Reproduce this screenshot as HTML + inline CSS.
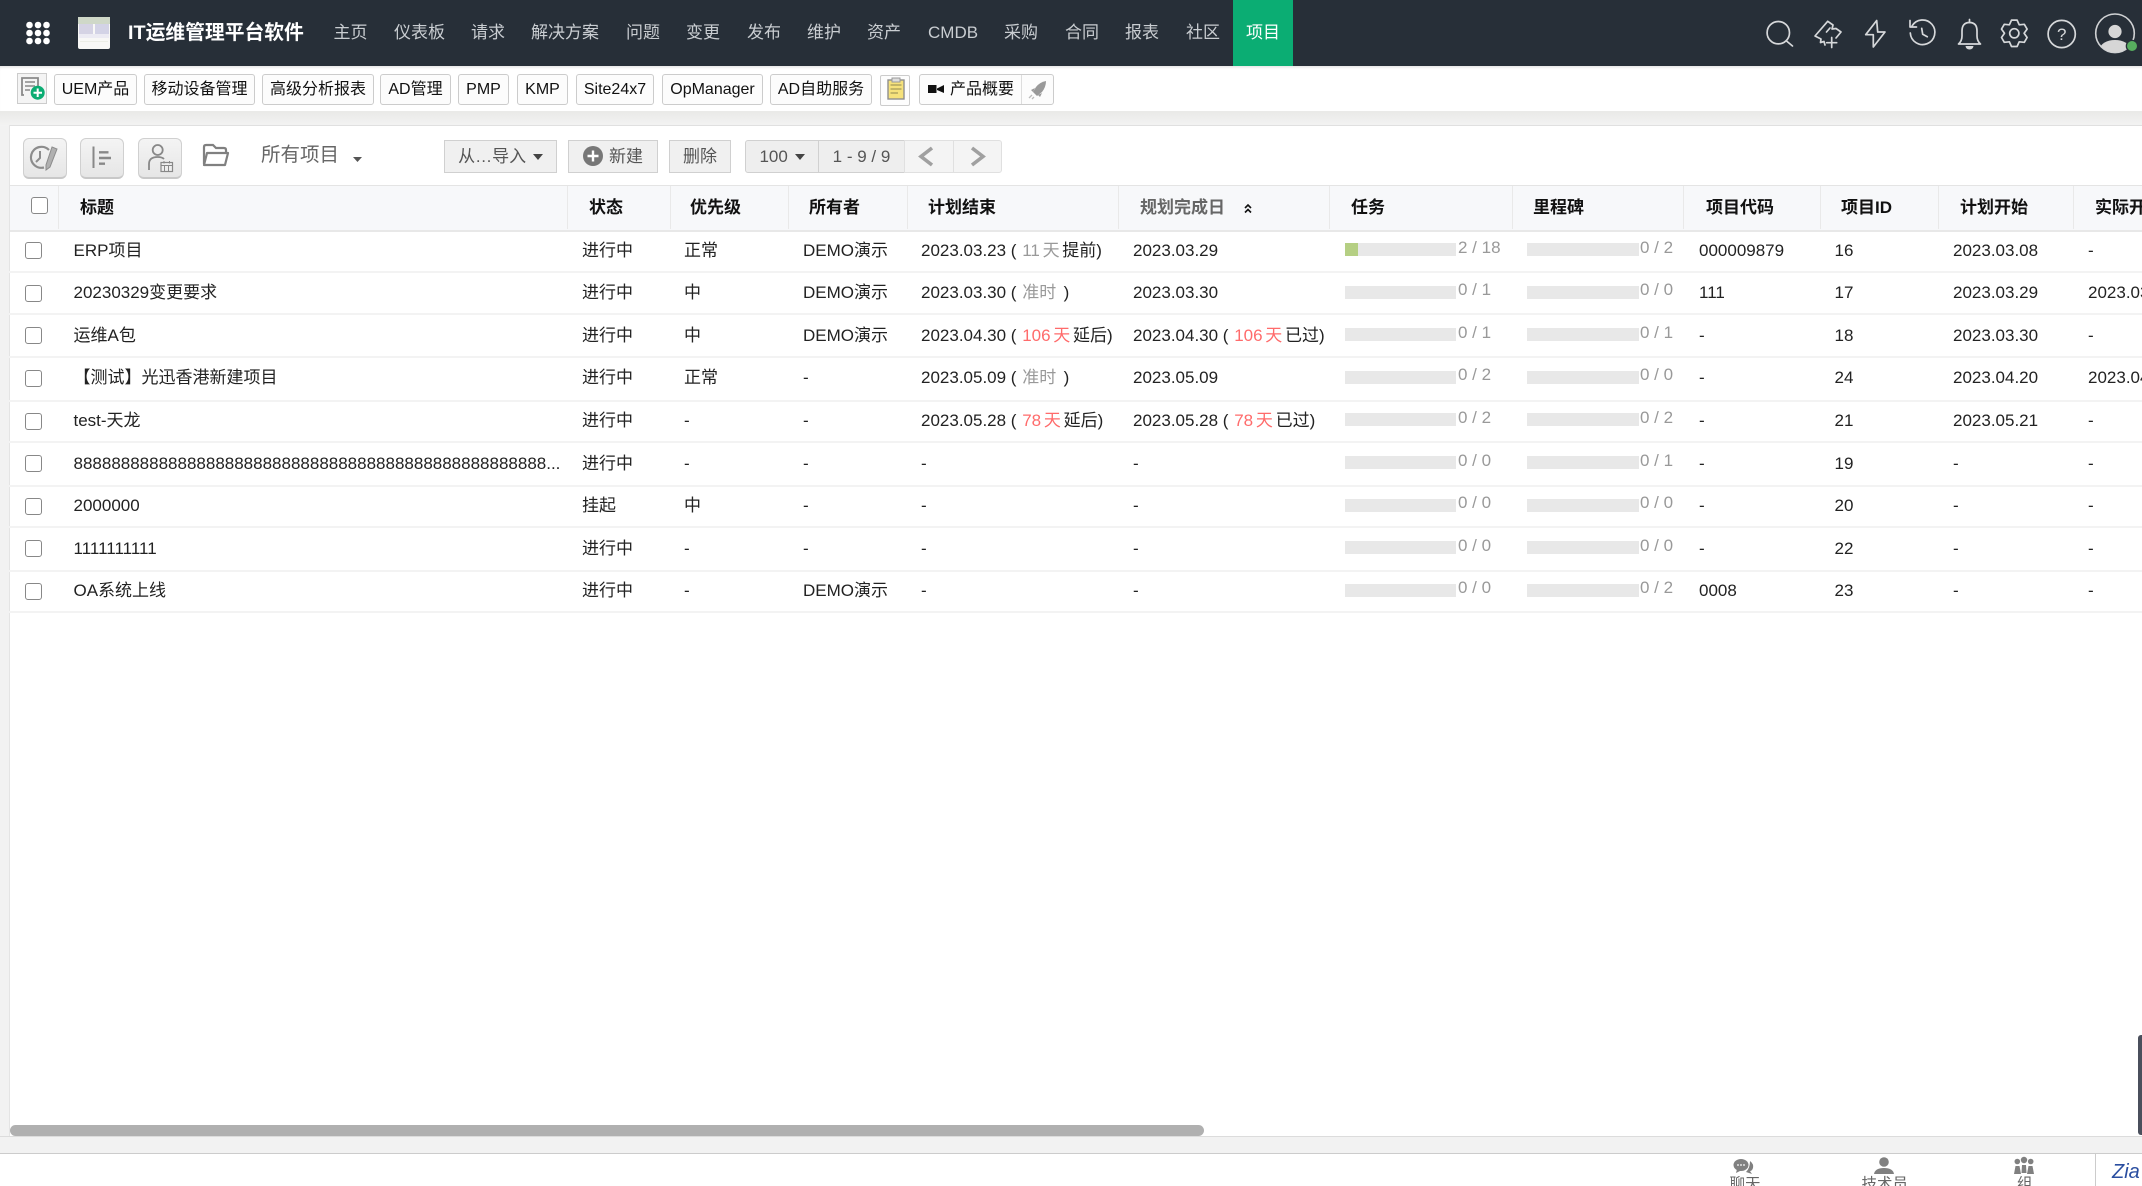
<!DOCTYPE html>
<html lang="zh-CN"><head><meta charset="utf-8"><title>项目</title>
<style>
html,body{margin:0;padding:0;background:#fff}
#p{position:relative;width:2142px;height:1186px;overflow:hidden;background:#fff;font-family:"Liberation Sans","Noto Sans CJK SC",sans-serif;font-size:17px;color:#222}
#p div,#p span.a,#p svg{position:absolute}
.nav{top:0;height:66px;line-height:66px;color:#c9cdd1;font-size:17px;white-space:nowrap}
.tb{top:74px;height:29px;line-height:29px;border:1px solid #ccc;border-radius:3px;background:#fcfcfc;font-size:16px;color:#111;text-align:center;white-space:nowrap}
.ib{top:138px;height:38px;border:1px solid #d0d0d0;border-bottom:2px solid #c8c8c8;border-radius:6px;background:linear-gradient(#f4f4f4,#e6e6e6);box-sizing:content-box}
.bt{top:140px;height:31px;line-height:31px;border:1px solid #d0d0d0;background:#f0f0f0;color:#555;text-align:center;white-space:nowrap}
.th{top:187px;height:42px;line-height:42px;font-weight:bold;color:#111;white-space:nowrap}
.vl{top:186px;height:43px;width:1px;background:#e9e9e9}
.hl{left:9px;width:2133px;height:2px;background:#f3f3f3}
.r{left:0;width:2142px;height:42px;line-height:42px;white-space:nowrap}
.r>span{position:absolute;top:1px}
.c0{left:73.5px}.c1{left:582px}.c2{left:684px}.c3{left:803px}.c4{left:921px}.c5{left:1133px}.c6{left:1458px;color:#999;margin-top:-3px}.c7{left:1640px;color:#999;margin-top:-3px}.c8{left:1699px}.c9{left:1834.5px}.c10{left:1953px}.c11{left:2088px}
.b1,.b2{top:14px;height:13px;background:#e8e8e8}
.b1{left:1345px;width:111px}.b2{left:1527px;width:112px}
.r.o .b1,.r.o .b2{top:15px}
.cb{left:24.5px;top:13px;width:15px;height:15px;border:1px solid #888;border-radius:3px;background:#fff}
.g,.d{margin-left:1px;margin-right:-2px;word-spacing:-2px}
.g{color:#999}.d{color:#ff6b6b}
</style></head><body><div id="p">

<div style="left:0;top:0;width:2142px;height:66px;background:#272f38"></div>
<div style="left:0;top:66px;width:2142px;height:45px;background:#fff;box-shadow:inset 0 3px 3px -2px #ddd"></div>
<div style="left:0;top:111px;width:2142px;height:15px;background:linear-gradient(#e9e9e7,#f3f3f3)"></div>
<div style="left:0;top:126px;width:9px;height:1010px;background:#f2f2f2"></div>
<div style="left:9px;top:125px;width:2133px;height:1px;background:#e0e0e0"></div>
<div style="left:9px;top:125px;width:1px;height:1011px;background:#e4e4e4"></div>

<svg style="left:0;top:0" width="2142" height="66" viewBox="0 0 2142 66">
<g fill="#fff"><circle cx="29.5" cy="25" r="3.3"/><circle cx="38" cy="25" r="3.3"/><circle cx="46.5" cy="25" r="3.3"/><circle cx="29.5" cy="33" r="3.3"/><circle cx="38" cy="33" r="3.3"/><circle cx="46.5" cy="33" r="3.3"/><circle cx="29.5" cy="41" r="3.3"/><circle cx="38" cy="41" r="3.3"/><circle cx="46.5" cy="41" r="3.3"/></g>
<rect x="78" y="17" width="32" height="32" rx="2" fill="#f8f8f6"/>
<rect x="78" y="17" width="32" height="7" fill="#cfd8c8"/>
<rect x="79" y="24" width="14" height="10" fill="#d5d3e4"/><rect x="95" y="24" width="14" height="10" fill="#d3d3e6"/>
<rect x="79" y="34" width="30" height="4" fill="#ecebf3"/>
<rect x="80" y="41" width="28" height="1" fill="#eceee6"/>
<g fill="none" stroke="#d6d8da" stroke-width="1.7" stroke-linejoin="round" stroke-linecap="round">
<circle cx="1778.3" cy="32.7" r="11.2"/><path d="M1786.5 41 L1792.5 46"/>
<path d="M1825 45 L1824 41.500 L1820.500 42.500 L1821 39 L1815 36 L1827.700 21.300 L1833 25 L1832 29 L1836 28.500 L1841 32 L1836 38"/><path d="M1826.500 32 L1830 28"/><path d="M1831.700 37.500V47.500M1826.700 42.700H1836.700"/>
<path d="M1876.700 20.500 L1865.700 34.700 L1873.300 34.700 L1873.300 47 L1885 32 L1877.700 32 Z"/>
<path d="M1912 26 A12.3 12.3 0 1 1 1910.3 33"/><path d="M1910 20.500 V27 H1916.500"/><path d="M1921.700 28.300 L1922.700 34.300 L1927.300 36.700"/>
<path d="M1958.500 44 Q1962 41 1962 36 V31 Q1962 22.500 1969.500 22.500 Q1977 22.500 1977 31 V36 Q1977 41 1980.500 44 Z"/><path d="M1969.500 19.500 V22.500"/>
<path transform="translate(2014.3 33.3)" d="M-2.800 -13.200 L2.800 -13.200 L4.900 -8.500 L10 -9 L12.800 -4.200 L9.800 0 L12.800 4.200 L10 9 L4.900 8.500 L2.800 13.200 L-2.800 13.200 L-4.900 8.500 L-10 9 L-12.800 4.200 L-9.800 0 L-12.800 -4.200 L-10 -9 L-4.900 -8.500 Z"/>
<circle cx="2014.3" cy="33.3" r="4.600"/>
<circle cx="2061.700" cy="34" r="13.600"/>
</g>
<path d="M1965.500 46 H1973.500 Q1973 49.500 1969.500 49.500 Q1966 49.500 1965.500 46 Z" fill="#d6d8da"/>
<text x="2061.700" y="40" text-anchor="middle" font-size="17" fill="#d6d8da" font-family="Liberation Sans">?</text>
<clipPath id="av"><circle cx="2115" cy="33.300" r="19"/></clipPath>
<circle cx="2115" cy="33.300" r="19.300" fill="none" stroke="#d0d2d4" stroke-width="1.600"/>
<circle cx="2115" cy="31.500" r="6.600" fill="#d6d6d6"/>
<ellipse cx="2115" cy="49" rx="15" ry="9" fill="#d6d6d6" clip-path="url(#av)"/>
<circle cx="2132" cy="46" r="6.300" fill="#272f38"/><circle cx="2132" cy="46" r="5" fill="#57ad5f"/>
</svg>
<div style="left:128px;top:0;height:66px;line-height:66px;color:#fff;font-size:19.800px;font-weight:bold;white-space:nowrap">IT运维管理平台软件</div>
<div class="nav" style="left:333.500px">主页</div>
<div class="nav" style="left:394px">仪表板</div>
<div class="nav" style="left:471px">请求</div>
<div class="nav" style="left:531px">解决方案</div>
<div class="nav" style="left:626px">问题</div>
<div class="nav" style="left:686px">变更</div>
<div class="nav" style="left:747px">发布</div>
<div class="nav" style="left:807px">维护</div>
<div class="nav" style="left:867px">资产</div>
<div class="nav" style="left:928px">CMDB</div>
<div class="nav" style="left:1004px">采购</div>
<div class="nav" style="left:1065px">合同</div>
<div class="nav" style="left:1125px">报表</div>
<div class="nav" style="left:1186px">社区</div>
<div style="left:1233px;top:0;width:60px;height:66px;background:#0bad73"></div>
<div class="nav" style="left:1246px;color:#fff">项目</div>

<div style="left:17px;top:73px;width:28px;height:29px;border:1px solid #ccc;background:#f4f4f4"></div>
<svg style="left:17px;top:73px" width="30" height="31" viewBox="17 73 30 31">
<path d="M24 95 H22 V78 H38 V88" fill="none" stroke="#8a8a8a" stroke-width="1.800"/>
<path d="M25 82H35M25 86H35M25 90H30" stroke="#8a8a8a" stroke-width="1.500"/>
<circle cx="37.700" cy="92.700" r="7" fill="#0bad73"/><path d="M37.700 88.500V97M33.500 92.700H42" stroke="#fff" stroke-width="2"/>
</svg>
<div class="tb" style="left:54px;width:81px">UEM产品</div>
<div class="tb" style="left:144px;width:109px">移动设备管理</div>
<div class="tb" style="left:262px;width:110px">高级分析报表</div>
<div class="tb" style="left:380px;width:69px">AD管理</div>
<div class="tb" style="left:458px;width:49px">PMP</div>
<div class="tb" style="left:517px;width:49px">KMP</div>
<div class="tb" style="left:576px;width:76px">Site24x7</div>
<div class="tb" style="left:662px;width:99px">OpManager</div>
<div class="tb" style="left:770px;width:100px">AD自助服务</div>
<div style="left:880px;top:75px;width:28px;height:29px;border:1px solid #ccc;background:#fdfdfd;border-radius:2px"></div>
<svg style="left:880px;top:75px" width="30" height="31" viewBox="880 75 30 31">
<rect x="888" y="80" width="16" height="19" fill="#f6e27c" stroke="#8f8f8f" stroke-width="1.400"/>
<rect x="892" y="78" width="8" height="4" fill="#ddd" stroke="#999"/>
<path d="M890.500 85H901.500M890.500 89H901.500M890.500 93H898" stroke="#a59a58" stroke-width="1.200"/>
</svg>
<div class="tb" style="left:919px;width:133px;text-align:left"></div>
<div style="left:1021px;top:75px;width:1px;height:29px;background:#ddd"></div>
<svg style="left:925px;top:80px" width="24" height="18" viewBox="925 80 24 18"><rect x="928" y="85" width="8.500" height="8" fill="#111"/><path d="M937 88.500 L944 85 V93 L937 90 Z" fill="#111"/></svg>
<div style="left:950px;top:74px;height:31px;line-height:31px;font-size:16px;color:#111;white-space:nowrap">产品概要</div>
<svg style="left:1027px;top:79px" width="22" height="22" viewBox="1027 79 22 22">
<path d="M1046 81 Q1040 82 1036 87 L1033 92 L1037 96 L1042 92 Q1046 87 1046 81 Z" fill="#999"/>
<path d="M1035 88 L1031 90 L1033 92 Z M1042 93 L1040 97 L1038 95 Z" fill="#999"/>
<path d="M1032 95 L1029 98 M1034 97 L1032 99" stroke="#bbb" stroke-width="1.300"/>
</svg>

<div class="ib" style="left:23px;width:42px"></div>
<svg style="left:23px;top:138px" width="44" height="41" viewBox="23 138 44 41">
<path d="M49 150 A10.500 10.500 0 1 0 44 167.500" fill="none" stroke="#8c8c8c" stroke-width="2.200"/>
<path d="M40 151 V158 L36 162" fill="none" stroke="#8c8c8c" stroke-width="2"/>
<path d="M52 147 L57 149 L50 167 L46 170 L46 165 Z" fill="#b0b0b0" stroke="#8c8c8c"/>
</svg>
<div class="ib" style="left:80px;width:42px"></div>
<svg style="left:80px;top:138px" width="44" height="41" viewBox="80 138 44 41">
<path d="M93.500 146.500V168" stroke="#888" stroke-width="2"/>
<path d="M99 152.300H108.500M99 158H111M99 163.700H105" stroke="#888" stroke-width="2.400"/>
</svg>
<div class="ib" style="left:138px;width:42px"></div>
<svg style="left:138px;top:138px" width="44" height="41" viewBox="138 138 44 41">
<circle cx="157.700" cy="150" r="5" fill="none" stroke="#888" stroke-width="1.800"/>
<path d="M149 170 V164 Q149 157 157.700 157 Q162 157 164 159" fill="none" stroke="#888" stroke-width="1.800"/>
<rect x="161" y="162.500" width="11.500" height="9" fill="#eee" stroke="#888" stroke-width="1.200"/>
<path d="M161 165.500H172.500M164.500 165.500V171.500M168.500 165.500V171.500M164 161V163.500M169.500 161V163.500" stroke="#888"/>
</svg>
<svg style="left:202px;top:143px" width="29" height="26" viewBox="202 143 29 26">
<path d="M204 164 V147 Q204 145 206 145 H213 L216 148 H224 Q226 148 226 150 V152" fill="none" stroke="#808080" stroke-width="2.200"/>
<path d="M204 165 L207 153 H228 L225 165 Z" fill="none" stroke="#808080" stroke-width="2.200" stroke-linejoin="round"/>
</svg>
<div style="left:261px;top:138px;height:34px;line-height:34px;font-size:19.500px;color:#666;white-space:nowrap">所有项目</div>
<svg style="left:350px;top:155px" width="14" height="9" viewBox="0 0 14 9"><path d="M3 2H12L7.500 7Z" fill="#555"/></svg>

<div class="bt" style="left:444px;width:111px">从…导入 <span style="display:inline-block;width:0;height:0;border:5px solid transparent;border-top:6px solid #444;border-bottom:0;vertical-align:2px;margin-left:2px"></span></div>
<div class="bt" style="left:568px;width:88px;text-indent:26px">新建</div>
<svg style="left:582px;top:145px" width="22" height="22" viewBox="0 0 22 22"><circle cx="11" cy="11" r="10" fill="#777"/><path d="M11 5.500V16.500M5.500 11H16.500" stroke="#fff" stroke-width="2.400"/></svg>
<div class="bt" style="left:669px;width:60px">删除</div>
<div class="bt" style="left:745px;width:72px;border-radius:3px 0 0 3px;background:#eee">100 <span style="display:inline-block;width:0;height:0;border:5px solid transparent;border-top:6px solid #444;border-bottom:0;vertical-align:2px;margin-left:2px"></span></div>
<div class="bt" style="left:818px;width:85px;background:#eee">1 - 9 / 9</div>
<div class="bt" style="left:904px;width:48px;background:#f4f4f4;border-color:#e0e0e0"></div>
<div class="bt" style="left:953px;width:47px;background:#f4f4f4;border-color:#e0e0e0;border-radius:0 3px 3px 0"></div>
<svg style="left:915px;top:146px" width="75" height="22" viewBox="915 146 75 22"><path d="M932 148 L921 156.500 L932 165" fill="none" stroke="#a0a0a0" stroke-width="3.600"/><path d="M972 148 L983 156.500 L972 165" fill="none" stroke="#a0a0a0" stroke-width="3.600"/></svg>

<div style="left:10px;top:185px;width:2132px;height:44px;background:#f7f8fa;border-top:1px solid #e4e4e4;border-bottom:2px solid #e8e8e8"></div>
<div class="vl" style="left:58px"></div><div class="vl" style="left:567px"></div><div class="vl" style="left:670px"></div><div class="vl" style="left:788px"></div><div class="vl" style="left:907px"></div><div class="vl" style="left:1118px"></div><div class="vl" style="left:1329px"></div><div class="vl" style="left:1512px"></div><div class="vl" style="left:1683px"></div><div class="vl" style="left:1820px"></div><div class="vl" style="left:1938px"></div><div class="vl" style="left:2073px"></div>
<div style="left:31px;top:197px;width:15px;height:15px;border:1px solid #888;border-radius:3px;background:#fff"></div>
<div class="th" style="left:80px">标题</div>
<div class="th" style="left:589px">状态</div>
<div class="th" style="left:690px">优先级</div>
<div class="th" style="left:809px">所有者</div>
<div class="th" style="left:928px">计划结束</div>
<div class="th" style="left:1140px;color:#666">规划完成日</div>
<svg style="left:1243px;top:203px" width="10" height="11" viewBox="0 0 10 11"><path d="M2 5 L5 2 L8 5 M2 9.500 L5 6.500 L8 9.500" fill="none" stroke="#111" stroke-width="1.600"/></svg>
<div class="th" style="left:1351px">任务</div>
<div class="th" style="left:1533px">里程碑</div>
<div class="th" style="left:1706px">项目代码</div>
<div class="th" style="left:1841px">项目ID</div>
<div class="th" style="left:1960px">计划开始</div>
<div class="th" style="left:2095px">实际开始</div>

<div class="hl" style="top:271px"></div><div class="hl" style="top:313px"></div><div class="hl" style="top:356px"></div><div class="hl" style="top:400px"></div><div class="hl" style="top:441px"></div><div class="hl" style="top:485px"></div><div class="hl" style="top:526px"></div><div class="hl" style="top:570px"></div><div class="hl" style="top:611px"></div>

<div class="r" style="top:229px"><div class="cb"></div><span class="c0">ERP项目</span><span class="c1">进行中</span><span class="c2">正常</span><span class="c3">DEMO演示</span><span class="c4">2023.03.23 ( <span class="g">11 天</span> 提前)</span><span class="c5">2023.03.29</span><div class="b1"></div><div style="left:1345px;top:14px;width:13px;height:13px;background:#b5cf83"></div><span class="c6">2 / 18</span><div class="b2"></div><span class="c7">0 / 2</span><span class="c8">000009879</span><span class="c9">16</span><span class="c10">2023.03.08</span><span class="c11">-</span></div>

<div class="r o" style="top:271px"><div class="cb" style="top:14px"></div><span class="c0">20230329变更要求</span><span class="c1">进行中</span><span class="c2">中</span><span class="c3">DEMO演示</span><span class="c4">2023.03.30 ( <span class="g">准时</span>&nbsp; )</span><span class="c5">2023.03.30</span><div class="b1"></div><span class="c6">0 / 1</span><div class="b2"></div><span class="c7">0 / 0</span><span class="c8">111</span><span class="c9">17</span><span class="c10">2023.03.29</span><span class="c11">2023.03.29</span></div>

<div class="r" style="top:314px"><div class="cb"></div><span class="c0">运维A包</span><span class="c1">进行中</span><span class="c2">中</span><span class="c3">DEMO演示</span><span class="c4">2023.04.30 ( <span class="d">106 天</span> 延后)</span><span class="c5">2023.04.30 ( <span class="d">106 天</span> 已过)</span><div class="b1"></div><span class="c6">0 / 1</span><div class="b2"></div><span class="c7">0 / 1</span><span class="c8">-</span><span class="c9">18</span><span class="c10">2023.03.30</span><span class="c11">-</span></div>

<div class="r o" style="top:356px"><div class="cb" style="top:14px"></div><span class="c0">【测试】光迅香港新建项目</span><span class="c1">进行中</span><span class="c2">正常</span><span class="c3">-</span><span class="c4">2023.05.09 ( <span class="g">准时</span>&nbsp; )</span><span class="c5">2023.05.09</span><div class="b1"></div><span class="c6">0 / 2</span><div class="b2"></div><span class="c7">0 / 0</span><span class="c8">-</span><span class="c9">24</span><span class="c10">2023.04.20</span><span class="c11">2023.04.20</span></div>

<div class="r" style="top:399px"><div class="cb" style="top:14px"></div><span class="c0">test-天龙</span><span class="c1">进行中</span><span class="c2">-</span><span class="c3">-</span><span class="c4">2023.05.28 ( <span class="d">78 天</span> 延后)</span><span class="c5">2023.05.28 ( <span class="d">78 天</span> 已过)</span><div class="b1"></div><span class="c6">0 / 2</span><div class="b2"></div><span class="c7">0 / 2</span><span class="c8">-</span><span class="c9">21</span><span class="c10">2023.05.21</span><span class="c11">-</span></div>

<div class="r" style="top:442px"><div class="cb"></div><span class="c0">88888888888888888888888888888888888888888888888888...</span><span class="c1">进行中</span><span class="c2">-</span><span class="c3">-</span><span class="c4">-</span><span class="c5">-</span><div class="b1"></div><span class="c6">0 / 0</span><div class="b2"></div><span class="c7">0 / 1</span><span class="c8">-</span><span class="c9">19</span><span class="c10">-</span><span class="c11">-</span></div>

<div class="r o" style="top:484px"><div class="cb" style="top:14px"></div><span class="c0">2000000</span><span class="c1">挂起</span><span class="c2">中</span><span class="c3">-</span><span class="c4">-</span><span class="c5">-</span><div class="b1"></div><span class="c6">0 / 0</span><div class="b2"></div><span class="c7">0 / 0</span><span class="c8">-</span><span class="c9">20</span><span class="c10">-</span><span class="c11">-</span></div>

<div class="r" style="top:527px"><div class="cb"></div><span class="c0">1111111111</span><span class="c1">进行中</span><span class="c2">-</span><span class="c3">-</span><span class="c4">-</span><span class="c5">-</span><div class="b1"></div><span class="c6">0 / 0</span><div class="b2"></div><span class="c7">0 / 0</span><span class="c8">-</span><span class="c9">22</span><span class="c10">-</span><span class="c11">-</span></div>

<div class="r o" style="top:569px"><div class="cb" style="top:14px"></div><span class="c0">OA系统上线</span><span class="c1">进行中</span><span class="c2">-</span><span class="c3">DEMO演示</span><span class="c4">-</span><span class="c5">-</span><div class="b1"></div><span class="c6">0 / 0</span><div class="b2"></div><span class="c7">0 / 2</span><span class="c8">0008</span><span class="c9">23</span><span class="c10">-</span><span class="c11">-</span></div>

<div style="left:10px;top:1125px;width:1194px;height:11px;background:#b0b0b0;border-radius:5.500px"></div>
<div style="left:2138px;top:1035px;width:4px;height:100px;background:#4a4f5c;border-radius:3px 0 0 3px"></div>
<div style="left:0;top:1136px;width:2142px;height:18px;background:#f2f2f2;border-top:1px solid #dcdcdc;border-bottom:1px solid #ccc;box-sizing:border-box"></div>
<div style="left:2095px;top:1154px;width:1px;height:32px;background:#ccc"></div>

<svg style="left:1720px;top:1154px" width="320" height="24" viewBox="1720 1154 320 24">
<g fill="#808080">
<ellipse cx="1741" cy="1165" rx="7.500" ry="6"/><path d="M1737 1169 L1736 1173 L1742 1170 Z"/>
<path d="M1750 1161 Q1754 1164 1753 1168 Q1752 1171 1750 1171 L1752 1174 L1746 1172 Q1750 1168 1750 1161 Z"/>
<circle cx="1884" cy="1162" r="4.800"/><path d="M1874 1174 Q1875 1168 1884 1168 Q1893 1168 1894 1174 Z"/>
<circle cx="2024" cy="1160" r="3.200"/><circle cx="2017.300" cy="1161.500" r="2.800"/><circle cx="2030.700" cy="1161.500" r="2.800"/>
<path d="M2014 1174 L2015.500 1166 H2019.500 L2021 1174 Z M2027 1174 L2028.500 1166 H2032.500 L2034 1174 Z M2021.500 1173 L2022 1165 H2026 L2026.500 1173 Z"/>
</g>
<g fill="#fff"><circle cx="1738" cy="1165" r=".9"/><circle cx="1741" cy="1165" r=".9"/><circle cx="1744" cy="1165" r=".9"/></g>
</svg>
<div style="left:1729.500px;top:1174px;font-size:15.500px;line-height:22px;color:#666;white-space:nowrap">聊天</div>
<div style="left:1861.500px;top:1174px;font-size:15.500px;line-height:22px;color:#666;white-space:nowrap">技术员</div>
<div style="left:2017px;top:1174px;font-size:15.500px;line-height:22px;color:#666;white-space:nowrap">组</div>
<div style="left:2112px;top:1160px;font-style:italic;font-size:20px;line-height:24px;color:#2a4ea0;white-space:nowrap">Zia</div>
</div></body></html>
